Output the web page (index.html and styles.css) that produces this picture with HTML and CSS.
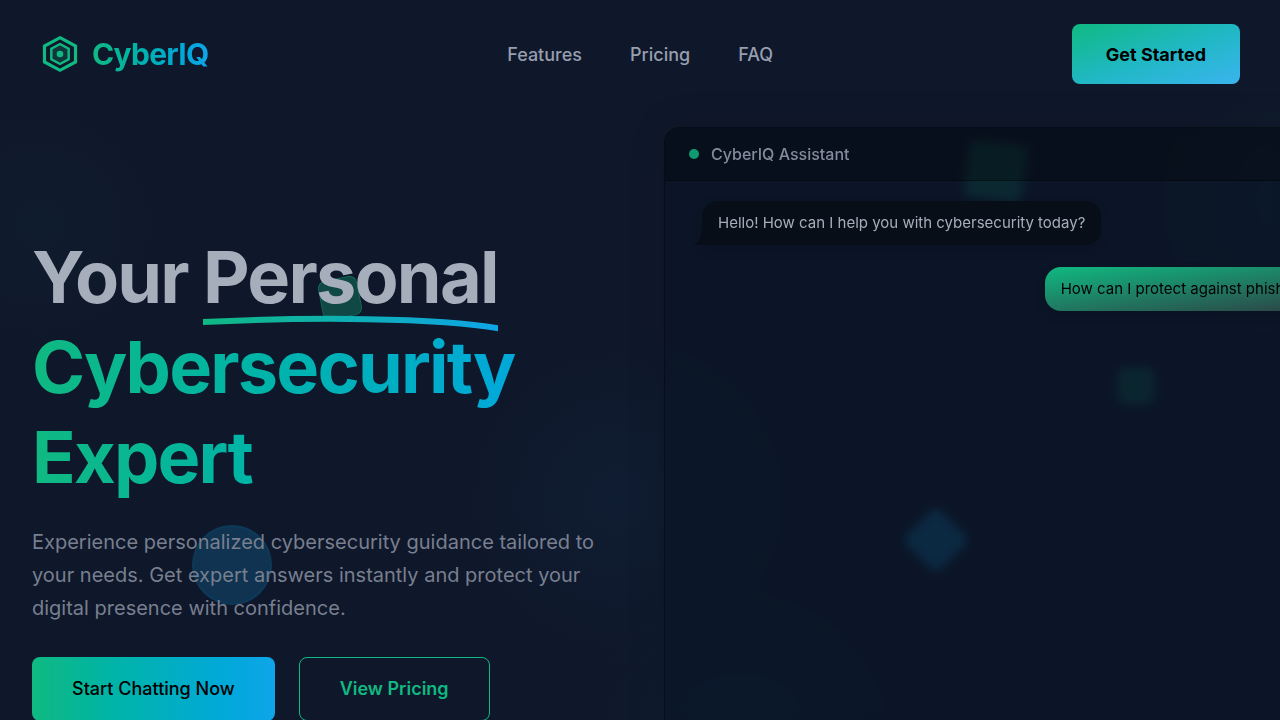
FILE: index.html
```html
<!DOCTYPE html>
<html lang="en">
<head>
<meta charset="UTF-8" />
<meta name="viewport" content="width=device-width, initial-scale=1" />
<title>CyberIQ</title>
<link rel="stylesheet" href="styles.css">
</head>
<body>
<div class="page">
  <div class="backdrop" aria-hidden="true">
    <div class="shape shape-tile"></div>
    <div class="shape shape-circle"></div>
    <div class="shape shape-box"></div>
    <div class="shape shape-chip"></div>
    <div class="shape shape-diamond"></div>
  </div>

  <header class="navbar">
    <a class="logo" href="#">
      <svg class="logo-icon" viewBox="0 0 40 40" fill="none" aria-hidden="true">
        <path d="M20 3.7 L35.5 12 V28 L20 36.3 L4.5 28 V12 Z" stroke="#10b981" stroke-width="3.2" />
        <path d="M20 10 L28.7 14.8 V25.2 L20 30 L11.3 25.2 V14.8 Z" fill="#10b981" fill-opacity="0.2" stroke="#10b981" stroke-width="2.4" />
        <circle cx="20" cy="20" r="3.3" fill="#10b981" />
      </svg>
      <span class="logo-text">CyberIQ</span>
    </a>
    <nav class="nav-links">
      <a href="#features">Features</a>
      <a href="#pricing">Pricing</a>
      <a href="#faq">FAQ</a>
    </nav>
    <button class="btn-nav" type="button">Get Started</button>
  </header>

  <main class="hero">
    <section class="hero-content">
      <h1>
        Your
        <span class="underlined">Personal<svg class="underline" viewBox="0 0 295 20" preserveAspectRatio="none" fill="none" aria-hidden="true">
            <defs>
              <linearGradient id="lineGradient" x1="0" y1="0" x2="1" y2="0">
                <stop offset="0" stop-color="#10b981" />
                <stop offset="1" stop-color="#0ea5e9" />
              </linearGradient>
            </defs>
            <path d="M-4 10.2 C100 5 240 5 299 17" stroke="url(#lineGradient)" stroke-width="6" />
          </svg></span>
        <span class="gradient-text">Cybersecurity Expert</span>
      </h1>
      <p class="lead">Experience personalized cybersecurity guidance tailored to your needs. Get expert answers instantly and protect your digital presence with confidence.</p>
      <div class="hero-actions">
        <button class="btn btn-primary" type="button">Start Chatting Now</button>
        <button class="btn btn-outline" type="button">View Pricing</button>
      </div>
    </section>

    <section class="chat" aria-label="CyberIQ Assistant">
      <div class="chat-header">
        <span class="status-dot"></span>
        <span class="chat-title">CyberIQ Assistant</span>
      </div>
      <div class="chat-body">
        <div class="message message-bot">Hello! How can I help you with cybersecurity today?</div>
        <div class="message message-user">How can I protect against phishing attacks?</div>
      </div>
    </section>
  </main>
</div>
</body>
</html>
```
FILE: styles.css
```css
* {
  box-sizing: border-box;
  margin: 0;
  padding: 0;
}
body {
  background: #0f172a;
  color: #a6adbb;
  font-family: Inter, sans-serif;
}
.page {
  position: relative;
  min-height: 100vh;
  overflow: hidden;
}

/* Background glow and floating shapes */
.backdrop {
  position: absolute;
  inset: 0;
  background:
    radial-gradient(circle at 40px 225px, rgba(16, 185, 129, 0.03), transparent 150px),
    radial-gradient(circle at 620px 500px, rgba(14, 165, 233, 0.04), transparent 180px),
    radial-gradient(circle at 1300px 200px, rgba(16, 185, 129, 0.04), transparent 150px),
    radial-gradient(circle at 740px 740px, rgba(14, 165, 233, 0.05), transparent 160px);
}
.shape {
  position: absolute;
}
.shape-tile {
  left: 320px;
  top: 278px;
  width: 40px;
  height: 40px;
  border-radius: 8px;
  background: rgba(16, 185, 129, 0.3);
  border: 1px solid rgba(16, 185, 129, 0.3);
  transform: rotate(-11deg);
}
.shape-circle {
  left: 192px;
  top: 525px;
  width: 80px;
  height: 80px;
  border-radius: 50%;
  background: rgba(14, 165, 233, 0.2);
  border: 2px solid rgba(14, 165, 233, 0.06);
}
.shape-box {
  left: 967px;
  top: 143px;
  width: 58px;
  height: 58px;
  border-radius: 8px;
  background: rgba(16, 185, 129, 0.22);
  transform: rotate(8deg);
}
.shape-chip {
  left: 1118px;
  top: 368px;
  width: 36px;
  height: 36px;
  border-radius: 8px;
  background: rgba(16, 185, 129, 0.2);
}
.shape-diamond {
  left: 912px;
  top: 516px;
  width: 48px;
  height: 48px;
  border-radius: 8px;
  background: rgba(14, 165, 233, 0.28);
  transform: rotate(45deg);
}

/* Navigation */
.navbar {
  position: relative;
  display: flex;
  align-items: center;
  justify-content: space-between;
  padding: 24px 40px;
}
.logo {
  display: flex;
  align-items: center;
  gap: 12px;
  text-decoration: none;
}
.logo-icon {
  width: 40px;
  height: 40px;
}
.logo-text,
.gradient-text {
  background: linear-gradient(90deg, #10b981, #00b4a6 36%, #00a9d8 78%, #0ea5e9);
  -webkit-background-clip: text;
  background-clip: text;
  color: transparent;
}
.logo-text {
  font-size: 30px;
  font-weight: 700;
  letter-spacing: -0.025em;
}
.nav-links {
  display: flex;
  gap: 48px;
}
.nav-links a {
  color: #979eae;
  font-size: 18px;
  font-weight: 500;
  text-decoration: none;
}
button {
  font-family: inherit;
  font-size: 18px;
  border: none;
  border-radius: 8px;
  cursor: pointer;
}
.btn-nav {
  height: 60px;
  padding: 0 34px;
  background: linear-gradient(to bottom right, #10b981, #20b8c4 52%, #3ab4ee);
  color: #000;
  font-weight: 700;
}

/* Hero */
.hero {
  position: relative;
  display: grid;
  grid-template-columns: minmax(0, 1fr) minmax(0, 1fr);
  align-items: center;
  gap: 32px;
  padding: 19px 16px 32px 32px;
}
h1 {
  font-size: 72px;
  line-height: 90px;
  font-weight: 700;
  letter-spacing: -0.025em;
  margin-bottom: 24px;
}
.underlined {
  position: relative;
  display: inline-block;
}
.underline {
  position: absolute;
  left: 0;
  bottom: -10px;
  width: 100%;
  height: 20px;
}
.gradient-text {
  display: block;
}
.lead {
  color: #787f8f;
  font-size: 20px;
  line-height: 33px;
  margin-bottom: 32px;
}
.hero-actions {
  display: flex;
  gap: 24px;
}
.btn {
  height: 64px;
  padding: 0 40px;
  font-weight: 500;
}
.btn-primary {
  background: linear-gradient(90deg, #10b981, #00b4a6 32%, #00a9d8 78%, #0ea5e9);
  color: #000;
}
.btn-outline {
  background: transparent;
  border: 1px solid #10b981;
  color: #10b981;
  font-weight: 600;
}

/* Chat panel */
.chat {
  width: 738px;
  min-height: 698px;
  border: 1px solid rgba(0, 0, 0, 0.35);
  border-radius: 16px;
  background: rgba(7, 20, 35, 0.5);
  backdrop-filter: blur(4px);
  box-shadow: 0 0 40px rgba(0, 0, 0, 0.1);
  overflow: hidden;
}
.chat-header {
  display: flex;
  align-items: center;
  gap: 12px;
  padding: 16px 24px;
  background: rgba(0, 0, 0, 0.25);
  border-bottom: 1px solid rgba(0, 0, 0, 0.35);
}
.status-dot {
  width: 10px;
  height: 10px;
  border-radius: 50%;
  background: #0f9b70;
}
.chat-title {
  color: #848b9a;
  font-size: 16px;
  line-height: 20px;
  font-weight: 500;
}
.chat-body {
  display: flex;
  flex-direction: column;
  align-items: flex-start;
  gap: 22px;
  padding: 20px 16px 20px 37px;
}
.message {
  position: relative;
  padding: 12px 16px;
  border-radius: 16px;
  font-size: 15px;
  line-height: 20px;
  box-shadow: 0 4px 12px rgba(0, 0, 0, 0.12);
}
.message-bot {
  background: #070e18;
  border-bottom-left-radius: 0;
}
/* Curved tail on the lower left corner */
.message-bot::before {
  content: "";
  position: absolute;
  left: -10px;
  bottom: 0;
  width: 10px;
  height: 16px;
  background: radial-gradient(ellipse 10px 16px at top left, transparent 97%, #070e18);
}
.message-user {
  align-self: flex-end;
  background: linear-gradient(to bottom right, #10b981, #30363f);
  color: #000;
}
```
